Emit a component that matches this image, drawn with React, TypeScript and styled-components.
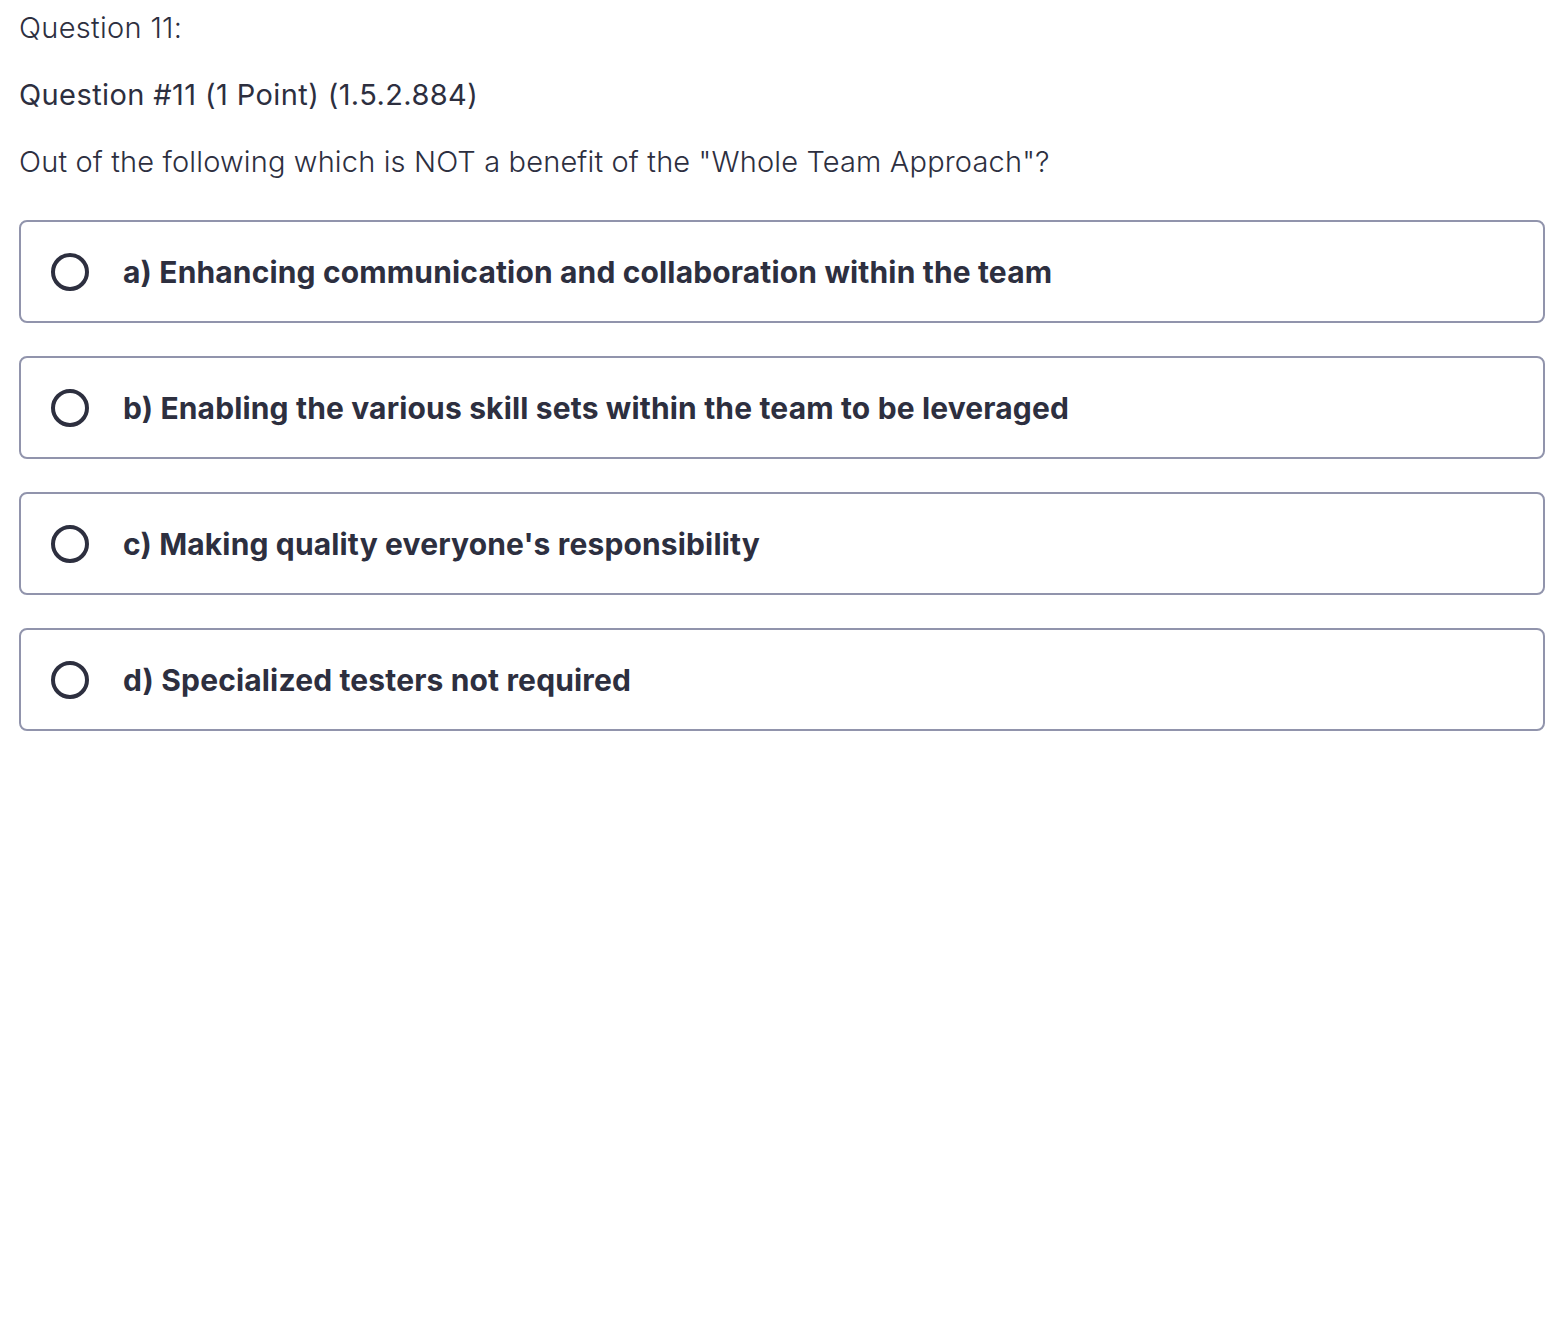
import React from 'react';
import styled, { createGlobalStyle } from 'styled-components';

const GlobalStyle = createGlobalStyle`
  body {
    margin: 0;
    background: #fff;
    font-family: Inter, "Noto Sans", sans-serif;
    color: #2d2f3f;
  }
`;

const options = [
  'a) Enhancing communication and collaboration within the team',
  'b) Enabling the various skill sets within the team to be leveraged',
  "c) Making quality everyone's responsibility",
  'd) Specialized testers not required',
];

export default function App() {
  return (
    <>
      <GlobalStyle />
      <Page>
        <Heading>Question 11:</Heading>
        <SubHeading>Question #11 (1 Point) (1.5.2.884)</SubHeading>
        <Prompt>Out of the following which is NOT a benefit of the "Whole Team Approach"?</Prompt>
        <OptionList>
          {options.map((text) => (
            <Option key={text}>
              <Radio />
              <OptionText>{text}</OptionText>
            </Option>
          ))}
        </OptionList>
      </Page>
    </>
  );
}

const Page = styled.div`
  padding: 8px 21px 0 19px;
`;

const Heading = styled.div`
  font-size: 29px;
  font-weight: 300;
  line-height: 40px;
  letter-spacing: 0.3px;
`;

const SubHeading = styled.div`
  margin-top: 27px;
  font-size: 29px;
  font-weight: 400;
  line-height: 40px;
  letter-spacing: 0.4px;
`;

const Prompt = styled.div`
  margin-top: 27px;
  font-size: 29px;
  font-weight: 300;
  line-height: 40px;
  letter-spacing: 0.15px;
`;

const OptionList = styled.div`
  margin-top: 38px;
  display: flex;
  flex-direction: column;
  gap: 33px;
`;

const Option = styled.label`
  display: flex;
  align-items: center;
  gap: 34px;
  height: 103px;
  box-sizing: border-box;
  padding: 0 30px;
  border: 2px solid #9194ac;
  border-radius: 8px;
  cursor: pointer;
`;

const Radio = styled.span`
  flex: none;
  width: 38px;
  height: 38px;
  box-sizing: border-box;
  border: 4px solid #2d2f3f;
  border-radius: 50%;
`;

const OptionText = styled.span`
  font-size: 30px;
  font-weight: 700;
  letter-spacing: 0.15px;
`;
